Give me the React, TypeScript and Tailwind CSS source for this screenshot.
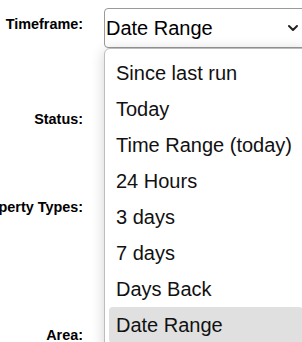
import { ChevronDown } from 'lucide-react';

const options = ['Since last run', 'Today', 'Time Range (today)', '24 Hours', '3 days', '7 days', 'Days Back', 'Date Range'];
const selected = 'Date Range';

function Label({ text, className }: { text: string; className?: string }) {
  return (
    <div className={`flex w-[83px] shrink-0 justify-end ${className ?? ''}`}>
      <span className="whitespace-nowrap text-[14.4px] font-bold leading-[17px] text-black">{text}</span>
    </div>
  );
}

export default function App() {
  return (
    <div className="relative h-[342px] w-[302px] overflow-hidden bg-white font-['Liberation_Sans',Arial,sans-serif]">
      <div className="flex flex-col pt-2">
        <div className="flex items-start gap-[21px]">
          <Label text="Timeframe:" className="pt-2" />
          <div className="flex h-10 w-[210px] shrink-0 items-center rounded-[4px] border border-[#9a9a9a] bg-white pl-[1px] pr-[12px]">
            <span className="flex-1 text-[20px] leading-6 text-black">{selected}</span>
            <ChevronDown className="h-4 w-4 text-[#222]" strokeWidth={3} />
          </div>
        </div>
        <Label text="Status:" className="mt-[63px]" />
        <Label text="Property Types:" className="mt-[71px]" />
        <Label text="Area:" className="mt-[111px]" />
      </div>

      <div className="absolute left-[104px] top-[48px] w-[204px] rounded-[6px] border border-[#bdbdbd] bg-white px-1 pt-[6px] pb-2 shadow-[0_2px_14px_rgba(0,0,0,0.18)]">
        {options.map((o) => (
          <div
            key={o}
            className={`h-9 rounded-[4px] pl-[7px] text-[20px] leading-9 text-[#111] ${o === selected ? 'bg-[#e0e0e0]' : ''}`}
          >
            {o}
          </div>
        ))}
      </div>
    </div>
  );
}
